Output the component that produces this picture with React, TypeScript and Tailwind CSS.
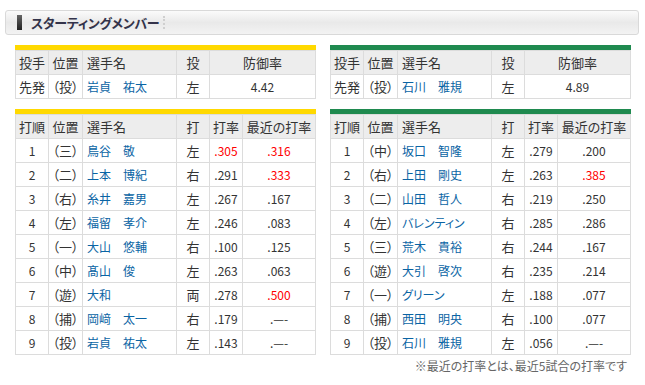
import React from 'react';

type Batter = {
  order: number;
  pos: string;
  name: string;
  hand: string;
  avg: string;
  recent: string;
  avgRed?: boolean;
  recentRed?: boolean;
};

type Team = {
  color: string;
  pitcher: { name: string; hand: string; era: string };
  batters: Batter[];
};

const tigers: Team = {
  color: 'bg-[#ffd900]',
  pitcher: { name: '岩貞　祐太', hand: '左', era: '4.42' },
  batters: [
    { order: 1, pos: '三', name: '鳥谷　敬', hand: '左', avg: '.305', recent: '.316', avgRed: true, recentRed: true },
    { order: 2, pos: '二', name: '上本　博紀', hand: '右', avg: '.291', recent: '.333', recentRed: true },
    { order: 3, pos: '右', name: '糸井　嘉男', hand: '左', avg: '.267', recent: '.167' },
    { order: 4, pos: '左', name: '福留　孝介', hand: '左', avg: '.246', recent: '.083' },
    { order: 5, pos: '一', name: '大山　悠輔', hand: '右', avg: '.100', recent: '.125' },
    { order: 6, pos: '中', name: '髙山　俊', hand: '左', avg: '.263', recent: '.063' },
    { order: 7, pos: '遊', name: '大和', hand: '両', avg: '.278', recent: '.500', recentRed: true },
    { order: 8, pos: '捕', name: '岡﨑　太一', hand: '右', avg: '.179', recent: '.—-' },
    { order: 9, pos: '投', name: '岩貞　祐太', hand: '左', avg: '.143', recent: '.—-' },
  ],
};

const swallows: Team = {
  color: 'bg-[#1f8a4f]',
  pitcher: { name: '石川　雅規', hand: '左', era: '4.89' },
  batters: [
    { order: 1, pos: '中', name: '坂口　智隆', hand: '左', avg: '.279', recent: '.200' },
    { order: 2, pos: '右', name: '上田　剛史', hand: '左', avg: '.263', recent: '.385', recentRed: true },
    { order: 3, pos: '二', name: '山田　哲人', hand: '右', avg: '.219', recent: '.250' },
    { order: 4, pos: '左', name: 'バレンティン', hand: '右', avg: '.285', recent: '.286' },
    { order: 5, pos: '三', name: '荒木　貴裕', hand: '右', avg: '.244', recent: '.167' },
    { order: 6, pos: '遊', name: '大引　啓次', hand: '右', avg: '.235', recent: '.214' },
    { order: 7, pos: '一', name: 'グリーン', hand: '左', avg: '.188', recent: '.077' },
    { order: 8, pos: '捕', name: '西田　明央', hand: '右', avg: '.100', recent: '.077' },
    { order: 9, pos: '投', name: '石川　雅規', hand: '左', avg: '.056', recent: '.—-' },
  ],
};

const th = 'border border-[#dcdcdc] bg-[#ededed] text-[13px] font-normal p-0 text-center';
const td = 'border border-[#dcdcdc] text-[12px] p-0 text-center';

function PitcherTable({ team }: { team: Team }) {
  return (
    <div>
      <div className={`h-[5px] ${team.color}`} />
      <table className="w-[300px] table-fixed border-collapse">
        <colgroup>
          <col className="w-[33px]" />
          <col className="w-[34px]" />
          <col className="w-[94px]" />
          <col className="w-[33px]" />
          <col className="w-[106px]" />
        </colgroup>
        <thead>
          <tr className="h-[24px]">
            <th className={th}>投手</th>
            <th className={th}>位置</th>
            <th className={`${th} text-left pl-[4px]`}>選手名</th>
            <th className={th}>投</th>
            <th className={th}>防御率</th>
          </tr>
        </thead>
        <tbody>
          <tr className="h-[24px]">
            <td className={`${td} text-[13px]`}>先発</td>
            <td className={`${td} text-[13px]`}>（投）</td>
            <td className={`${td} text-left pl-[4px] text-[#0a64a4]`}>{team.pitcher.name}</td>
            <td className={`${td} text-[13px]`}>{team.pitcher.hand}</td>
            <td className={td}>{team.pitcher.era}</td>
          </tr>
        </tbody>
      </table>
    </div>
  );
}

function LineupTable({ team }: { team: Team }) {
  return (
    <div>
      <div className={`h-[5px] ${team.color}`} />
      <table className="w-[300px] table-fixed border-collapse">
        <colgroup>
          <col className="w-[33px]" />
          <col className="w-[34px]" />
          <col className="w-[94px]" />
          <col className="w-[33px]" />
          <col className="w-[33px]" />
          <col className="w-[73px]" />
        </colgroup>
        <thead>
          <tr className="h-[24px]">
            <th className={th}>打順</th>
            <th className={th}>位置</th>
            <th className={`${th} text-left pl-[4px]`}>選手名</th>
            <th className={th}>打</th>
            <th className={th}>打率</th>
            <th className={th}>最近の打率</th>
          </tr>
        </thead>
        <tbody>
          {team.batters.map((b) => (
            <tr key={b.order} className="h-[24px]">
              <td className={td}>{b.order}</td>
              <td className={`${td} text-[13px]`}>（{b.pos}）</td>
              <td className={`${td} text-left pl-[4px] text-[#0a64a4]`}>{b.name}</td>
              <td className={`${td} text-[13px]`}>{b.hand}</td>
              <td className={`${td} ${b.avgRed ? 'text-[#ff0000]' : ''}`}>{b.avg}</td>
              <td className={`${td} ${b.recentRed ? 'text-[#ff0000]' : ''}`}>{b.recent}</td>
            </tr>
          ))}
        </tbody>
      </table>
    </div>
  );
}

export default function App() {
  return (
    <div className="w-[645px] h-[385px] bg-white text-[#333] font-['Noto_Sans_CJK_JP',sans-serif] [font-feature-settings:'palt'] pt-[10px]">
      <div className="ml-[5px] w-[634px] h-[25px] border border-[#d9d9d9] rounded-[3px] bg-gradient-to-b from-[#fbfbfb] via-[#e9e9e9] to-[#f3f3f3] flex items-center">
        <span className="ml-[11px] w-[5px] h-[15px] bg-gradient-to-b from-[#666] to-[#222]" />
        <span className="ml-[9px] text-[13px] font-bold text-[#33334a] leading-none tracking-[-0.3px]">スターティングメンバー</span>
        <span className="ml-[4px] h-[13px] border-l-2 border-dotted border-[#cfcfcf]" />
      </div>
      <div className="ml-[15px] mt-[10px] flex gap-[14px]">
        <PitcherTable team={tigers} />
        <PitcherTable team={swallows} />
      </div>
      <div className="ml-[15px] mt-[10px] flex gap-[14px]">
        <LineupTable team={tigers} />
        <LineupTable team={swallows} />
      </div>
      <div className="w-[627px] text-right text-[12px] text-[#666] mt-[3px] leading-[16px]">
        ※最近の打率とは、最近5試合の打率です
      </div>
    </div>
  );
}
